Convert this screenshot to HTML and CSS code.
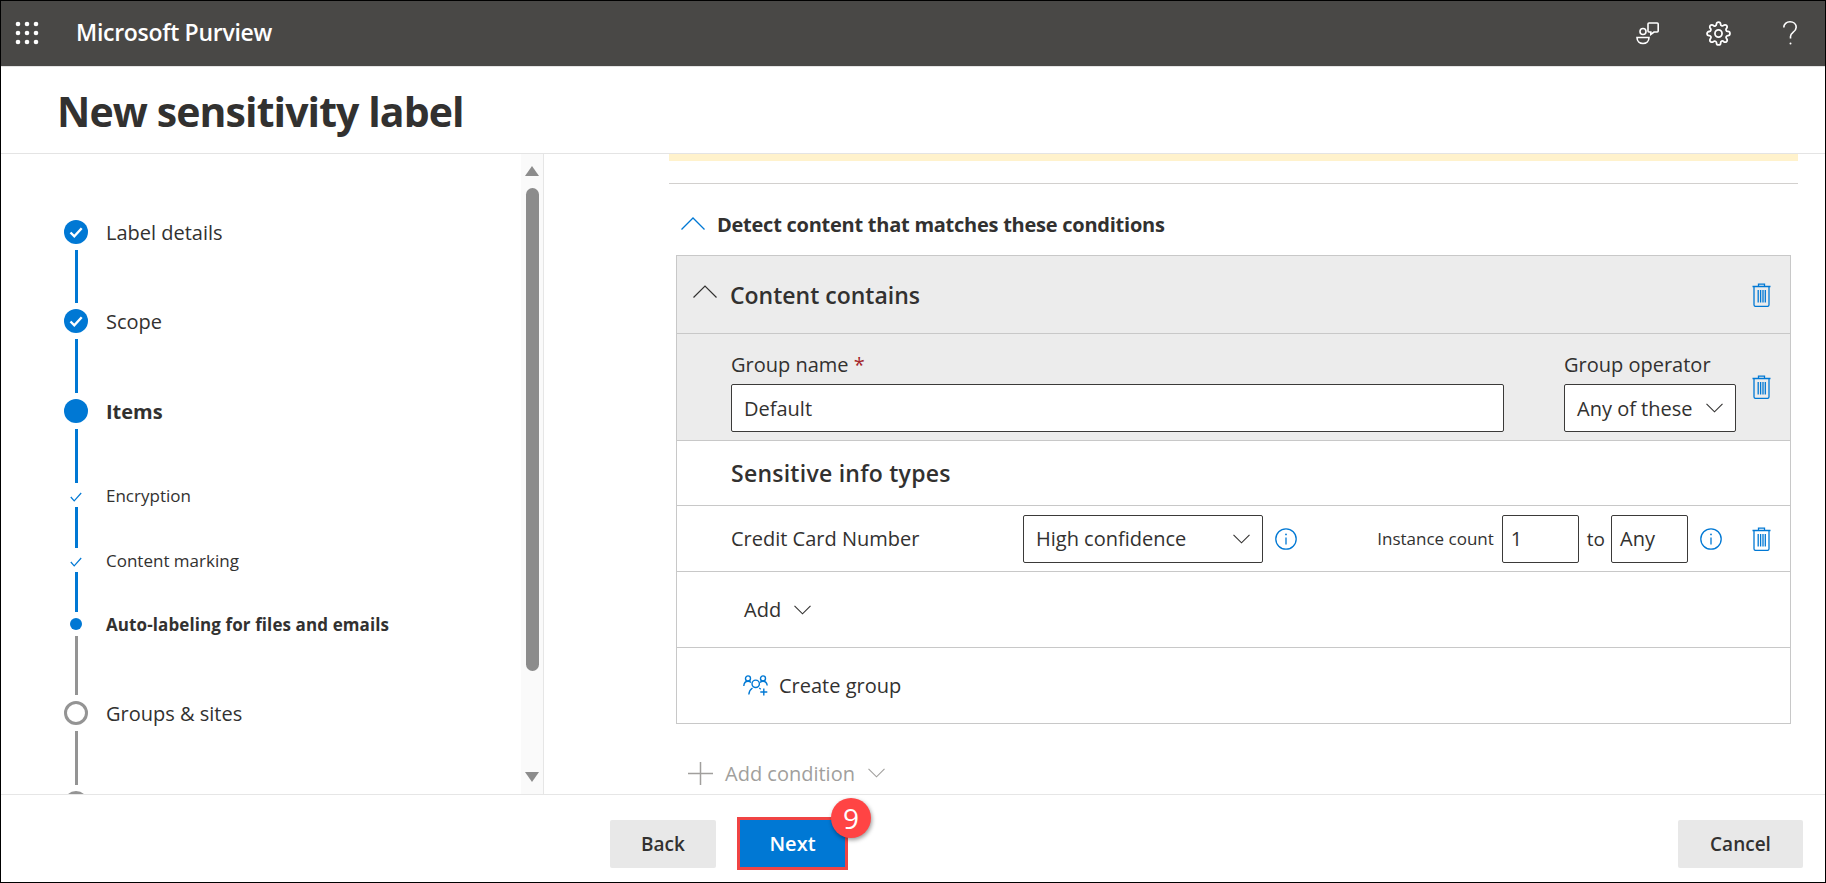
FILE: index.html
```html
<!DOCTYPE html>
<html lang="en">
<head>
<meta charset="utf-8">
<title>New sensitivity label - Microsoft Purview</title>
<link rel="stylesheet" href="styles.css">
</head>
<body>
<div class="frame">
  <header class="topbar">
    <svg class="waffle" viewBox="0 0 24 24" fill="#fff"><circle cx="3" cy="3" r="2.3"/><circle cx="12" cy="3" r="2.3"/><circle cx="21" cy="3" r="2.3"/><circle cx="3" cy="12" r="2.3"/><circle cx="12" cy="12" r="2.3"/><circle cx="21" cy="12" r="2.3"/><circle cx="3" cy="21" r="2.3"/><circle cx="12" cy="21" r="2.3"/><circle cx="21" cy="21" r="2.3"/></svg>
    <span class="brand">Microsoft Purview</span>
    <div class="top-icons">
      <svg class="ti-people" viewBox="0 0 23 23" fill="none" stroke="#fff" stroke-width="1.6"><circle cx="7" cy="9.5" r="3"/><path d="M1 15.5h12c0 3.5-2.6 6-6 6s-6-2.5-6-6z"/><path d="M13 1h8.2a1 1 0 0 1 1 1v7a1 1 0 0 1-1 1H18l-3.2 2.4V10H13a1 1 0 0 1-1-1V2a1 1 0 0 1 1-1z"/></svg>
      <svg class="ti-gear" viewBox="0 0 24 24" fill="none" stroke="#fff" stroke-width="1.7"><circle cx="12" cy="12" r="3.4"/><path d="M19.4 15a1.65 1.65 0 0 0 .33 1.82l.06.06a2 2 0 0 1 0 2.83 2 2 0 0 1-2.83 0l-.06-.06a1.65 1.65 0 0 0-1.82-.33 1.65 1.65 0 0 0-1 1.51V21a2 2 0 0 1-2 2 2 2 0 0 1-2-2v-.09A1.65 1.65 0 0 0 9 19.4a1.65 1.65 0 0 0-1.82.33l-.06.06a2 2 0 0 1-2.83 0 2 2 0 0 1 0-2.83l.06-.06a1.65 1.65 0 0 0 .33-1.82 1.65 1.65 0 0 0-1.51-1H3a2 2 0 0 1-2-2 2 2 0 0 1 2-2h.09A1.65 1.65 0 0 0 4.6 9a1.65 1.65 0 0 0-.33-1.82l-.06-.06a2 2 0 0 1 0-2.83 2 2 0 0 1 2.83 0l.06.06a1.65 1.65 0 0 0 1.82.33H9a1.65 1.65 0 0 0 1-1.51V3a2 2 0 0 1 2-2 2 2 0 0 1 2 2v.09a1.65 1.65 0 0 0 1 1.51 1.65 1.65 0 0 0 1.82-.33l.06-.06a2 2 0 0 1 2.83 0 2 2 0 0 1 0 2.83l-.06.06a1.65 1.65 0 0 0-.33 1.82V9a1.65 1.65 0 0 0 1.51 1H21a2 2 0 0 1 2 2 2 2 0 0 1-2 2h-.09a1.65 1.65 0 0 0-1.51 1z"/></svg>
      <svg class="ti-help" viewBox="0 0 14 24" fill="none" stroke="#fff" stroke-width="1.6"><path d="M.8 6.5C.8 3 3.5.8 7 .8c3.6 0 6.2 2.4 6.2 5.5 0 2.8-1.7 4-3.4 5.3-1.5 1.1-2.3 2-2.3 4v2"/><circle cx="7.5" cy="22.6" r="1" fill="#fff" stroke="none"/></svg>
    </div>
  </header>

  <div class="titlebar"><h1>New sensitivity label</h1></div>

  <div class="middle">
    <aside class="side">
      <nav class="steps">
        <div class="step">
          <span class="dot done"><svg viewBox="0 0 24 24" fill="none" stroke="#fff" stroke-width="2.4"><path d="M6.5 12.5l3.8 3.8 7.4-8"/></svg></span>
          <span class="step-label">Label details</span>
        </div>
        <i class="line blue h53"></i>
        <div class="step">
          <span class="dot done"><svg viewBox="0 0 24 24" fill="none" stroke="#fff" stroke-width="2.4"><path d="M6.5 12.5l3.8 3.8 7.4-8"/></svg></span>
          <span class="step-label">Scope</span>
        </div>
        <i class="line blue h54"></i>
        <div class="step">
          <span class="dot done"></span>
          <span class="step-label strong">Items</span>
        </div>
        <i class="line blue h54"></i>
        <div class="substep">
          <svg class="subcheck" viewBox="0 0 12 10" fill="none" stroke="#0078d4" stroke-width="1.2"><path d="M.8 5l3.4 3.8L11.2 1"/></svg>
          <span class="sub-label">Encryption</span>
        </div>
        <i class="line blue h41"></i>
        <div class="substep">
          <svg class="subcheck" viewBox="0 0 12 10" fill="none" stroke="#0078d4" stroke-width="1.2"><path d="M.8 5l3.4 3.8L11.2 1"/></svg>
          <span class="sub-label">Content marking</span>
        </div>
        <i class="line blue h40"></i>
        <div class="substep">
          <span class="subdot"></span>
          <span class="sub-label strong">Auto-labeling for files and emails</span>
        </div>
        <i class="line grey h59"></i>
        <div class="step">
          <span class="dot ring"></span>
          <span class="step-label">Groups &amp; sites</span>
        </div>
        <i class="line grey h54"></i>
        <div class="step">
          <span class="dot ring"></span>
        </div>
      </nav>
      <div class="scrollbar">
        <span class="arrow up"></span>
        <span class="thumb"></span>
        <span class="arrow down"></span>
      </div>
    </aside>

    <main class="main">
      <div class="notice"></div>
      <div class="rule"></div>
      <div class="section-head">
        <svg class="chev-up" viewBox="0 0 24 13" fill="none" stroke="#0078d4" stroke-width="1.3"><path d="M.5 12.5L12 1l11.5 11.5"/></svg>
        <h2>Detect content that matches these conditions</h2>
      </div>

      <section class="box">
        <div class="row row-head">
          <svg class="chev-dark" viewBox="0 0 24 13" fill="none" stroke="#323130" stroke-width="1.2"><path d="M.5 12.5L12 1l11.5 11.5"/></svg>
          <h3>Content contains</h3>
          <svg class="trash" viewBox="0 0 19 24" fill="none" stroke="#0078d4" stroke-width="1.3"><path d="M.5 3.5h18M6.5 3.3V1.2h6v2.1M2 3.5v18.3a1.6 1.6 0 0 0 1.6 1.6h11.8a1.6 1.6 0 0 0 1.6-1.6V3.5M6.2 7v12.5M8.6 7v12.5M11 7v12.5M13.3 7v12.5"/></svg>
        </div>

        <div class="row row-group">
          <div class="field name">
            <label class="flabel">Group name <span class="req">*</span></label>
            <div class="control">Default</div>
          </div>
          <div class="field op">
            <label class="flabel">Group operator</label>
            <div class="control select">Any of these
              <svg class="chev-down" viewBox="0 0 17 10" fill="none" stroke="#323130" stroke-width="1.1"><path d="M.5.8l8 8 8-8"/></svg>
            </div>
          </div>
          <svg class="trash low" viewBox="0 0 19 24" fill="none" stroke="#0078d4" stroke-width="1.3"><path d="M.5 3.5h18M6.5 3.3V1.2h6v2.1M2 3.5v18.3a1.6 1.6 0 0 0 1.6 1.6h11.8a1.6 1.6 0 0 0 1.6-1.6V3.5M6.2 7v12.5M8.6 7v12.5M11 7v12.5M13.3 7v12.5"/></svg>
        </div>

        <div class="row row-types"><h4>Sensitive info types</h4></div>

        <div class="row row-type">
          <span class="type-name">Credit Card Number</span>
          <div class="control select conf">High confidence
            <svg class="chev-down" viewBox="0 0 17 10" fill="none" stroke="#323130" stroke-width="1.1"><path d="M.5.8l8 8 8-8"/></svg>
          </div>
          <svg class="info first" viewBox="0 0 22 22" fill="none" stroke="#0078d4" stroke-width="1.3"><circle cx="11" cy="11" r="10.2"/><path d="M11 9.5v7"/><circle cx="11" cy="6.4" r=".9" fill="#0078d4" stroke="none"/></svg>
          <span class="count-label">Instance count</span>
          <div class="control num">1</div>
          <span class="to">to</span>
          <div class="control num any">Any</div>
          <svg class="info second" viewBox="0 0 22 22" fill="none" stroke="#0078d4" stroke-width="1.3"><circle cx="11" cy="11" r="10.2"/><path d="M11 9.5v7"/><circle cx="11" cy="6.4" r=".9" fill="#0078d4" stroke="none"/></svg>
          <svg class="trash" viewBox="0 0 19 24" fill="none" stroke="#0078d4" stroke-width="1.3"><path d="M.5 3.5h18M6.5 3.3V1.2h6v2.1M2 3.5v18.3a1.6 1.6 0 0 0 1.6 1.6h11.8a1.6 1.6 0 0 0 1.6-1.6V3.5M6.2 7v12.5M8.6 7v12.5M11 7v12.5M13.3 7v12.5"/></svg>
        </div>

        <div class="row row-add">
          <span class="action">Add</span>
          <svg class="chev-down add-chev" viewBox="0 0 17 10" fill="none" stroke="#323130" stroke-width="1.1"><path d="M.5.8l8 8 8-8"/></svg>
        </div>

        <div class="row row-create">
          <svg class="group-icon" viewBox="0 0 25 21" fill="none" stroke="#0078d4" stroke-width="1.4"><circle cx="5" cy="3.4" r="2.5"/><circle cx="20" cy="3.4" r="2.5"/><circle cx="12.7" cy="8.8" r="3.7"/><path d="M.8 11c.2-2.7 1.7-4.7 4.2-4.7 1.2 0 2.2.4 3 1.2M24.2 10.5c-.3-2.5-1.8-4.2-4.2-4.2-1.2 0-2.2.4-3 1.2M5.8 19.5c.3-3 1.6-5.2 3.7-6.5M16.2 13c.6.4 1.1.8 1.5 1.3M20.8 13.5v7M17.3 17h7"/></svg>
          <span class="action">Create group</span>
        </div>
      </section>

      <div class="add-cond">
        <svg class="plus" viewBox="0 0 25 23" fill="none" stroke="#a19f9d" stroke-width="1.5"><path d="M12.5 0v23M0 11.5h25"/></svg>
        <span>Add condition</span>
        <svg class="chev-down" viewBox="0 0 17 10" fill="none" stroke="#a19f9d" stroke-width="1.1"><path d="M.5.8l8 8 8-8"/></svg>
      </div>
    </main>
  </div>

  <footer class="footer">
    <button class="btn back">Back</button>
    <button class="btn next">Next<span class="badge">9</span></button>
    <button class="btn cancel">Cancel</button>
  </footer>
</div>
</body>
</html>
```

FILE: styles.css
```css
* { box-sizing: border-box; }
html, body { margin: 0; padding: 0; }
body { width: 1826px; height: 883px; overflow: hidden; background: #fff; font-family: "Open Sans", "Noto Sans", sans-serif; color: #323130; }
h1, h2, h3, h4 { margin: 0; }

.frame { width: 1826px; height: 883px; border: 1px solid #000; display: flex; flex-direction: column; overflow: hidden; }

.topbar { flex: 0 0 66px; background: #494846; border-bottom: 1px solid #e4e4e4; display: flex; align-items: center; padding: 0 28px 1px 14px; color: #fff; }
.waffle { width: 24px; height: 24px; }
.brand { margin-left: 37px; font-size: 23px; font-weight: 600; letter-spacing: -.3px; padding-bottom: 2px; }
.top-icons { margin-left: auto; display: flex; align-items: center; }
.ti-people { width: 23px; height: 23px; }
.ti-gear { width: 25px; height: 25px; margin-left: 47px; }
.ti-help { width: 14px; height: 24px; margin-left: 52px; }

.titlebar { flex: 0 0 87px; border-bottom: 1px solid #e4e4e4; display: flex; align-items: center; padding: 2px 0 0 56px; }
.titlebar h1 { font-size: 41px; font-weight: 700; letter-spacing: -.9px; line-height: 1; }

.middle { flex: 0 0 640px; display: flex; overflow: hidden; }

.side { flex: 0 0 543px; border-right: 1px solid #e6e6e6; display: flex; overflow: hidden; }
.steps { flex: 1; padding: 66px 0 0 63px; display: flex; flex-direction: column; }
.step { display: flex; align-items: center; height: 24px; flex: none; }
.dot { width: 24px; height: 24px; border-radius: 50%; flex: none; }
.dot svg { display: block; width: 24px; height: 24px; }
.dot.done { background: #0078d4; }
.dot.ring { border: 3px solid #949494; background: #fff; }
.step-label { margin-left: 18px; font-size: 20px; font-weight: 400; white-space: nowrap; }
.strong { font-weight: 700; }
.substep { display: flex; align-items: center; height: 12px; flex: none; }
.subcheck { width: 12px; height: 10px; margin: 4px 6px 0; flex: none; }
.subdot { width: 12px; height: 12px; border-radius: 50%; background: #0078d4; margin: 0 6px; flex: none; }
.sub-label { margin-left: 18px; font-size: 17px; white-space: nowrap; }
.sub-label.strong { letter-spacing: .1px; }
.line { display: block; width: 3px; margin: 6px 0 6px 11px; flex: none; }
.line.blue { background: #0078d4; }
.line.grey { background: #949494; }
.h53 { height: 53px; }
.h54 { height: 54px; }
.h41 { height: 41px; }
.h40 { height: 40px; }
.h59 { height: 59px; }

.scrollbar { flex: 0 0 22px; background: #fafafa; position: relative; display: flex; flex-direction: column; align-items: center; padding: 12px 0 12px 0; }
.arrow { width: 0; height: 0; border-left: 7px solid transparent; border-right: 7px solid transparent; flex: none; }
.arrow.up { border-bottom: 10px solid #8c8c8c; }
.arrow.down { border-top: 10px solid #8c8c8c; margin-top: 101px; }
.thumb { width: 13px; height: 483px; border-radius: 7px; background: #8c8c8c; margin-top: 12px; flex: none; }

.main { flex: 1; padding: 0 27px 0 125px; overflow: hidden; }
.notice { height: 7px; background: #fff2cc; }
.rule { height: 1px; margin-top: 22px; background: #d2d0ce; }
.section-head { display: flex; align-items: center; height: 32px; margin: 24px 0 15px 12px; }
.chev-up { width: 24px; height: 13px; flex: none; margin-top: -2px; }
.section-head h2 { margin-left: 12px; font-size: 20px; font-weight: 700; letter-spacing: -.25px; white-space: nowrap; }

.box { margin: 0 7px 0 7px; border: 1px solid #c8c8c8; }
.row { display: flex; align-items: center; border-bottom: 1px solid #c8c8c8; }
.row-head { height: 78px; background: #ececec; padding: 0 19px 0 16px; }
.chev-dark { width: 24px; height: 13px; flex: none; margin-top: -6px; }
.row-head h3 { margin-left: 13px; font-size: 23px; font-weight: 600; }
.trash { width: 19px; height: 24px; flex: none; margin-left: auto; }
.row-group { height: 107px; background: #ececec; padding: 19px 19px 0 54px; align-items: flex-start; }
.field { display: flex; flex-direction: column; }
.field.name { width: 773px; }
.field.op { width: 172px; margin-left: 60px; }
.flabel { font-size: 20px; line-height: 24px; margin-bottom: 7px; white-space: nowrap; }
.req { color: #a4262c; }
.control { height: 48px; border: 1px solid #3b3a39; border-radius: 2px; background: #fff; display: flex; align-items: center; padding: 0 12px; font-size: 20px; white-space: nowrap; }
.select { position: relative; justify-content: space-between; padding-right: 12px; }
.chev-down { width: 17px; height: 10px; flex: none; }
.trash.low { margin-top: 22px; margin-left: 16px; }
.row-types { height: 65px; padding-left: 54px; }
.row-types h4 { font-size: 23px; font-weight: 600; letter-spacing: .25px; }
.row-type { height: 66px; padding: 0 19px 0 54px; }
.type-name { width: 292px; font-size: 20px; white-space: nowrap; flex: none; }
.conf { width: 240px; flex: none; }
.info { width: 22px; height: 22px; flex: none; }
.info.first { margin-left: 12px; }
.count-label { margin-left: auto; font-size: 17px; white-space: nowrap; }
.num { width: 77px; flex: none; margin-left: 8px; padding: 0 8px; font-size: 20px; }
.num.any { margin-left: 6px; }
.to { margin-left: 8px; font-size: 19px; }
.info.second { margin-left: 12px; }
.row-type .trash { margin-left: 30px; }
.row-add { height: 76px; padding-left: 67px; }
.action { font-size: 20px; white-space: nowrap; }
.add-chev { margin-left: 13px; }
.row-create { height: 75px; padding-left: 66px; border-bottom: 0; }
.group-icon { width: 25px; height: 21px; flex: none; margin-right: 11px; }

.add-cond { display: flex; align-items: center; height: 32px; margin: 33px 0 0 19px; color: #a19f9d; font-size: 20px; }
.plus { width: 25px; height: 23px; flex: none; margin-right: 12px; }
.add-cond .chev-down { margin-left: 13px; }

.footer { flex: 0 0 88px; border-top: 1px solid #e6e6e6; display: flex; padding: 25px 22px 0 609px; align-items: flex-start; }
.btn { border: 0; font-family: inherit; font-size: 19px; font-weight: 600; color: #323130; border-radius: 2px; background: #e8e8e8; height: 48px; padding: 0; }
.back { width: 106px; }
.next { width: 111px; height: 53px; margin: -3px 0 0 21px; background: #0078d4; color: #fff; border: 3px solid #f04444; border-radius: 0; position: relative; font-size: 20px; }
.cancel { width: 125px; margin-left: auto; }
.badge { position: absolute; top: -22px; right: -26px; width: 40px; height: 40px; border-radius: 50%; background: #ff4444; color: #fff; font-size: 28px; font-weight: 400; display: flex; align-items: center; justify-content: center; box-shadow: 1px 2px 4px rgba(0,0,0,.4); }
```
